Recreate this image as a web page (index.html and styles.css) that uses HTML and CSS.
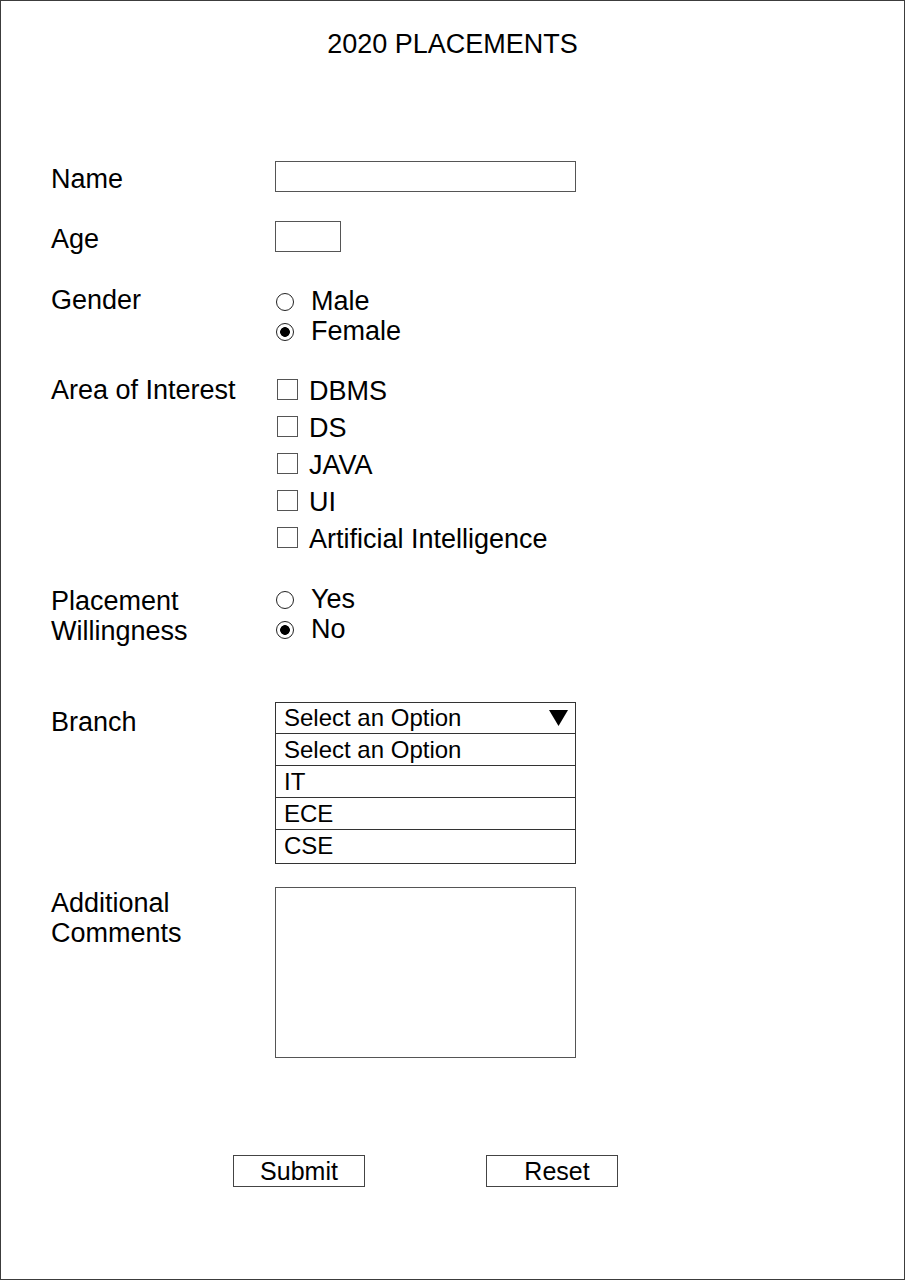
FILE: index.html
```html
<!DOCTYPE html>
<html lang="en">
<head>
<meta charset="utf-8">
<title>2020 Placements</title>
<link rel="stylesheet" href="styles.css">
</head>
<body>
<div class="page">
  <h1 class="title">2020 PLACEMENTS</h1>
  <form class="form">
    <div class="row row-name">
      <label class="label label-input">Name</label>
      <input class="text-input input-name" type="text">
    </div>
    <div class="row row-age">
      <label class="label label-input">Age</label>
      <input class="text-input input-age" type="text">
    </div>
    <div class="row row-gender">
      <span class="label">Gender</span>
      <div class="choices choices-gender">
        <label class="choice"><span class="radio"></span>Male</label>
        <label class="choice"><span class="radio checked"></span>Female</label>
      </div>
    </div>
    <div class="row row-interest">
      <span class="label">Area of Interest</span>
      <div class="checks">
        <label class="check"><span class="box"></span>DBMS</label>
        <label class="check"><span class="box"></span>DS</label>
        <label class="check"><span class="box"></span>JAVA</label>
        <label class="check"><span class="box"></span>UI</label>
        <label class="check"><span class="box"></span>Artificial Intelligence</label>
      </div>
    </div>
    <div class="row row-placement">
      <span class="label label-placement">Placement<br>Willingness</span>
      <div class="choices choices-placement">
        <label class="choice"><span class="radio"></span>Yes</label>
        <label class="choice"><span class="radio checked"></span>No</label>
      </div>
    </div>
    <div class="row row-branch">
      <span class="label label-branch">Branch</span>
      <div class="dropdown">
        <div class="dropdown-head">
          <span>Select an Option</span>
          <svg class="arrow" width="19" height="16" viewBox="0 0 19 16"><polygon points="0,0 19,0 9.5,16" fill="#000"/></svg>
        </div>
        <div class="option">Select an Option</div>
        <div class="option">IT</div>
        <div class="option">ECE</div>
        <div class="option option-last">CSE</div>
      </div>
    </div>
    <div class="row row-comments">
      <label class="label">Additional<br>Comments</label>
      <textarea class="comments"></textarea>
    </div>
  </form>
  <div class="actions">
    <button class="btn" type="button">Submit</button>
    <button class="btn btn-reset" type="button">Reset</button>
  </div>
</div>
</body>
</html>
```

FILE: styles.css
```css
html, body {
  margin: 0;
  padding: 0;
  background: #fff;
}

body {
  font-family: "Liberation Sans", Arial, sans-serif;
  color: #000;
}

.page {
  width: 905px;
  height: 1280px;
  box-sizing: border-box;
  border: 1px solid #3c3c3c;
  display: flex;
  flex-direction: column;
}

.title {
  margin: 0;
  padding-top: 27px;
  font-size: 27px;
  line-height: 32px;
  font-weight: normal;
  text-align: center;
}

.form {
  margin-top: 101px;
  padding-left: 50px;
  display: flex;
  flex-direction: column;
}

.row {
  display: grid;
  grid-template-columns: 224px 301px;
  align-items: start;
}

.row-age { margin-top: 27px; }
.row-gender { margin-top: 30px; }
.row-interest { margin-top: 28px; }
.row-placement { margin-top: 29px; }
.row-branch { margin-top: 56px; }
.row-comments { margin-top: 23px; }

.label {
  font-size: 27px;
  line-height: 30px;
  padding-top: 1px;
}

.label-input { padding-top: 3px; }
.label-placement { padding-top: 3px; }
.label-branch { padding-top: 5px; }

.text-input {
  box-sizing: border-box;
  height: 31px;
  margin: 0;
  padding: 0;
  border: 1px solid #555;
  border-radius: 0;
  background: #fff;
  outline: none;
}

.input-name { width: 301px; }
.input-age { width: 66px; }

.choices {
  display: flex;
  flex-direction: column;
}

.choices-gender { padding-top: 2px; }
.choices-placement { padding-top: 1px; }

.choice {
  display: flex;
  align-items: center;
  font-size: 27px;
  line-height: 30px;
}

.radio {
  width: 18px;
  height: 18px;
  box-sizing: border-box;
  border: 1px solid #222;
  border-radius: 50%;
  margin-left: 1px;
  margin-right: 17px;
  margin-top: 1px;
  background: #fff;
}

.radio.checked {
  background: radial-gradient(circle, #000 0 4.5px, #fff 5.2px);
}

.checks {
  padding-top: 2px;
  display: flex;
  flex-direction: column;
  gap: 7px;
}

.check {
  display: flex;
  align-items: center;
  font-size: 27px;
  line-height: 30px;
}

.box {
  width: 21px;
  height: 21px;
  box-sizing: border-box;
  border: 1px solid #555;
  margin-left: 2px;
  margin-right: 11px;
  margin-bottom: 4px;
  background: #fff;
}

.dropdown {
  width: 301px;
  box-sizing: border-box;
  border: 1px solid #333;
  font-size: 24px;
}

.dropdown-head {
  height: 30px;
  line-height: 30px;
  padding: 0 7px 0 8px;
  display: flex;
  align-items: center;
  justify-content: space-between;
  border-bottom: 1px solid #333;
}

.option {
  height: 31px;
  line-height: 31px;
  padding-left: 8px;
  border-bottom: 1px solid #333;
}

.option-last {
  height: 33px;
  border-bottom: none;
}

.comments {
  display: block;
  box-sizing: border-box;
  width: 301px;
  height: 171px;
  margin: 0;
  padding: 0;
  border: 1px solid #555;
  border-radius: 0;
  resize: none;
  outline: none;
  background: #fff;
}

.actions {
  margin-top: 97px;
  padding-left: 232px;
  display: flex;
  gap: 121px;
}

.btn {
  box-sizing: border-box;
  width: 132px;
  height: 32px;
  margin: 0;
  padding: 0;
  border: 1px solid #444;
  border-radius: 0;
  background: #fff;
  color: #000;
  font-family: "Liberation Sans", Arial, sans-serif;
  font-size: 25px;
  line-height: 30px;
  text-align: center;
}

.btn-reset {
  padding-left: 10px;
}
```
